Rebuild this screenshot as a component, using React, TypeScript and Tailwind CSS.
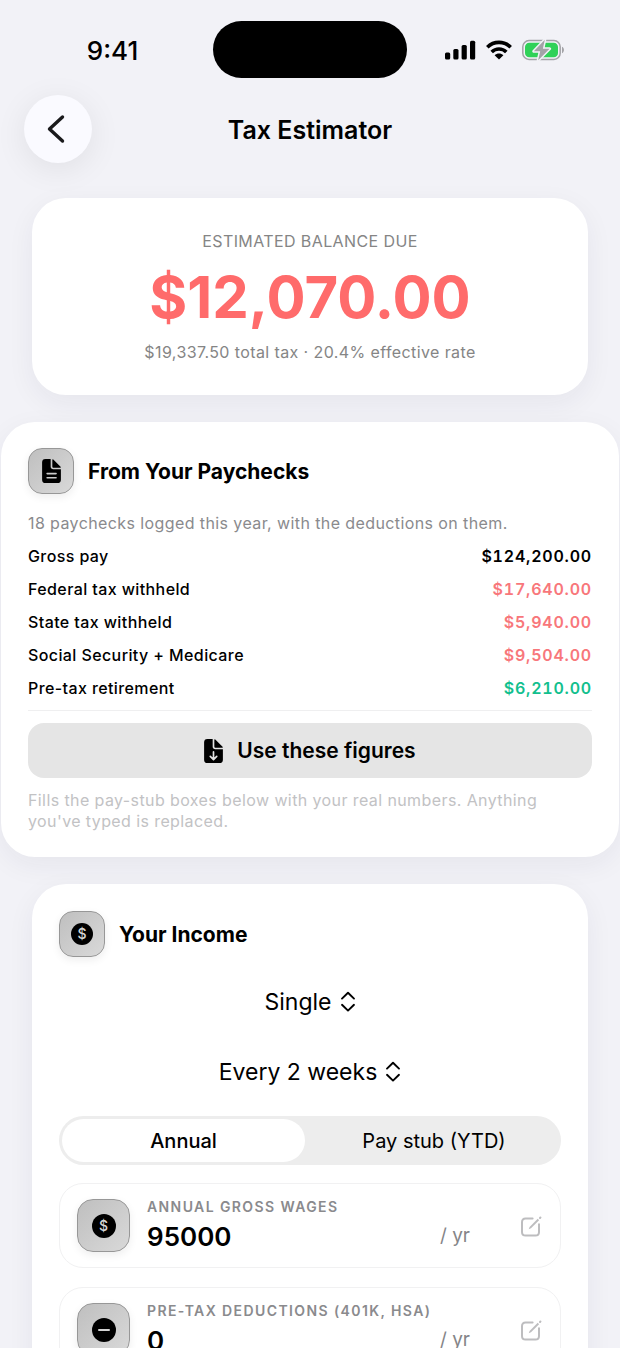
import clsx from 'clsx';
import React, { useState } from 'react';

type Tone = 'plain' | 'negative' | 'positive';

const paycheckRows: { label: string; amount: string; tone: Tone }[] = [
  { label: 'Gross pay', amount: '$124,200.00', tone: 'plain' },
  { label: 'Federal tax withheld', amount: '$17,640.00', tone: 'negative' },
  { label: 'State tax withheld', amount: '$5,940.00', tone: 'negative' },
  { label: 'Social Security + Medicare', amount: '$9,504.00', tone: 'negative' },
  { label: 'Pre-tax retirement', amount: '$6,210.00', tone: 'positive' },
];

const toneClasses: Record<Tone, string> = {
  plain: 'font-semibold text-black',
  negative: 'font-semibold text-[#f8777b]',
  positive: 'font-semibold text-[#12bf8e]',
};

const SignalIcon = () => (
  <svg width="31" height="20" viewBox="0 0 31 20" aria-hidden="true">
    <rect x="0" y="12.5" width="5.2" height="7" rx="1.5" />
    <rect x="8.3" y="9" width="5.2" height="10.5" rx="1.5" />
    <rect x="16.6" y="5" width="5.2" height="14.5" rx="1.5" />
    <rect x="25" y="0.7" width="5.2" height="18.8" rx="1.5" />
  </svg>
);

const WifiIcon = () => (
  <svg width="26" height="20" viewBox="0 0 26 20" fill="none" stroke="#000" strokeWidth="3.6" aria-hidden="true">
    <path d="M1.3 7.2 C7.8 0.8 18.2 0.8 24.7 7.2" />
    <path d="M5.7 12 C9.8 8 16.2 8 20.3 12" />
    <path d="M13 19.4 L8.6 15.2 C11.1 13 14.9 13 17.4 15.2 Z" fill="#000" stroke="none" />
  </svg>
);

const BatteryIcon = () => (
  <svg width="43" height="22" viewBox="0 0 43 22" aria-hidden="true">
    <rect x="0.8" y="1.6" width="37.4" height="18.8" rx="6.2" fill="none" stroke="#a3a3a7" strokeWidth="1.5" />
    <path d="M40 7.8 C42.6 8.8 42.6 13.2 40 14.2 Z" fill="#a3a3a7" />
    <rect x="3" y="3.7" width="33" height="14.6" rx="4.3" fill="#30d158" />
    <path
      d="M22.8 0.8 L11.8 12.3 H18.2 L16.2 21.2 L27.6 9.7 H20.9 Z"
      fill="#a3a3a7"
      stroke="#f2f2f7"
      strokeWidth="3"
      strokeLinejoin="round"
      paintOrder="stroke"
    />
  </svg>
);

const DocShape = () => (
  <>
    <path d="M3.2 0 H8.2 V7.4 C8.2 8.9 9.2 9.8 10.6 9.8 H18 V19.8 C18 21.9 16.9 23 14.8 23 H3.2 C1.1 23 0 21.9 0 19.8 V3.2 C0 1.1 1.1 0 3.2 0 Z" />
    <path d="M9.8 0.7 C9.8 0.1 10.3 0 10.7 0.4 L17.7 7.4 C18.1 7.9 17.9 8.4 17.3 8.4 H11 C10.2 8.4 9.8 8 9.8 7.2 Z" />
  </>
);

const DocTextIcon = () => (
  <svg width="19" height="24" viewBox="0 0 18 23" aria-hidden="true">
    <DocShape />
    <path d="M4.8 14 H13.4 M4.8 17.9 H13.4" stroke="#cbcbcb" strokeWidth="1.5" strokeLinecap="round" />
  </svg>
);

const DocDownloadIcon = () => (
  <svg width="19" height="24" viewBox="0 0 18 23" aria-hidden="true">
    <DocShape />
    <path
      d="M9 12.4 V19.6 M5.9 16.7 L9 19.8 L12.1 16.7"
      fill="none"
      stroke="#e5e5e5"
      strokeWidth="1.6"
      strokeLinecap="round"
      strokeLinejoin="round"
    />
  </svg>
);

const UpDownIcon = () => (
  <svg
    width="16"
    height="22"
    viewBox="0 0 16 22"
    fill="none"
    stroke="#000"
    strokeWidth="1.9"
    strokeLinecap="round"
    strokeLinejoin="round"
    aria-hidden="true"
  >
    <path d="M2 7.6 L8 1.8 L14 7.6 M2 13.8 L8 19.6 L14 13.8" />
  </svg>
);

const DollarBadge = ({ small = false }: { small?: boolean }) => (
  <span
    className={clsx(
      'flex items-center justify-center rounded-full bg-black text-sm font-medium text-[#d4d4d4]',
      small ? 'size-[22px]' : 'size-6'
    )}
  >
    $
  </span>
);

const MinusBadge = () => (
  <span className="flex size-6 items-center justify-center rounded-full bg-black">
    <span className="h-0.5 w-3 rounded-full bg-[#d4d4d4]" />
  </span>
);

const EditIcon = () => (
  <svg width="22" height="22" viewBox="0 0 22 22" fill="none" stroke="#bdbdbf" strokeWidth="2" strokeLinecap="round" aria-hidden="true">
    <path d="M12.6 3.6 H5.6 C3.2 3.6 2 4.8 2 7.2 V17 C2 19.4 3.2 20.6 5.6 20.6 H15.4 C17.8 20.6 19 19.4 19 17 V9.2" />
    <path d="M8.7 14.2 L9.6 11.9 L17.7 3.8 L19.1 5.2 L11 13.3 Z" fill="#bdbdbf" stroke="none" />
    <path d="M20 2.9 L20.4 2.5" strokeWidth="2.1" />
  </svg>
);

const IconTile = ({ large = false, children }: { large?: boolean; children: React.ReactNode }) => (
  <span
    className={clsx(
      'flex shrink-0 items-center justify-center border border-[#979797] bg-gradient-to-br from-[#bfbfbf] to-[#d9d9d9] shadow-[0_3px_8px_rgba(0,0,0,0.07)]',
      large ? 'size-[53px] rounded-2xl' : 'size-[46px] rounded-[14px]'
    )}
  >
    {children}
  </span>
);

const Card = ({ className, children }: { className?: string; children: React.ReactNode }) => (
  <section className={clsx('rounded-[34px] bg-white shadow-[0_8px_28px_rgba(30,30,60,0.06)]', className)}>
    {children}
  </section>
);

const CardHeader = ({ icon, title }: { icon: React.ReactNode; title: string }) => (
  <div className="flex items-center gap-3.5">
    <IconTile>{icon}</IconTile>
    <h2 className="pt-0.5 text-[21px] font-bold">{title}</h2>
  </div>
);

const PickerMenu = ({ label, options }: { label: string; options: string[] }) => (
  <div className="flex h-10 items-center justify-center gap-2">
    <select
      aria-label={label}
      className="h-10 appearance-none bg-transparent text-[23px] leading-10 outline-none [field-sizing:content]"
    >
      {options.map((option) => (
        <option key={option}>{option}</option>
      ))}
    </select>
    <UpDownIcon />
  </div>
);

interface MoneyFieldProps {
  id: string;
  label: string;
  initial: string;
  icon: React.ReactNode;
}

const MoneyField = ({ id, label, initial, icon }: MoneyFieldProps) => {
  const [value, setValue] = useState(initial);

  return (
    <div className="flex items-center rounded-3xl border border-[#f1f1f2] py-[15px] pr-[18px] pl-[17px]">
      <IconTile large>{icon}</IconTile>
      <div className="ml-[17px] min-w-0 flex-1">
        <label htmlFor={id} className="block text-sm leading-4 font-semibold tracking-widest text-[#8a8a8d] uppercase">
          {label}
        </label>
        <div className="mt-1.5 flex items-center">
          <input
            id={id}
            inputMode="decimal"
            value={value}
            onChange={(e) => setValue(e.target.value)}
            className="h-[31px] min-w-0 flex-1 bg-transparent text-[26px] font-semibold outline-none"
          />
          <span className="mr-[50px] text-[19px] text-[#858588]">/ yr</span>
        </div>
      </div>
      <button type="button" aria-label={`Edit ${label}`}>
        <EditIcon />
      </button>
    </div>
  );
};

const periods = ['Annual', 'Pay stub (YTD)'];

const TaxEstimatorPage = () => {
  const [period, setPeriod] = useState('Annual');

  return (
    <div className="h-screen w-full overflow-x-hidden overflow-y-auto bg-[#f2f2f7] font-['Inter',sans-serif] text-black [scrollbar-width:none]">
      {/* Status bar */}
      <div className="grid grid-cols-[1fr_194px_1fr] items-center pt-[21px]">
        <span className="pt-0.5 pl-3 text-center text-[26px] font-medium">9:41</span>
        <span className="h-[57px] rounded-full bg-black" />
        <div className="flex items-center justify-center gap-2.5 pr-[18px]">
          <SignalIcon />
          <WifiIcon />
          <BatteryIcon />
        </div>
      </div>

      {/* Navigation */}
      <header className="mt-[17px] grid grid-cols-[68px_1fr_68px] items-center px-6">
        <button
          type="button"
          aria-label="Back"
          className="flex size-[68px] items-center justify-center rounded-full bg-[#fafaff] shadow-[0_6px_32px_rgba(0,0,0,0.08)]"
        >
          <svg width="18" height="30" viewBox="0 0 18 30" fill="none" className="mr-1" aria-hidden="true">
            <path d="M15.5 3 L2.5 15 L15.5 27" stroke="#1a1a1c" strokeWidth="3.4" strokeLinecap="round" strokeLinejoin="round" />
          </svg>
        </button>
        <h1 className="pt-1 text-center text-[25px] font-semibold">Tax Estimator</h1>
      </header>

      <main className="mt-[35px] flex flex-col gap-[27px] pb-8">
        <Card className="mx-8 px-7 py-[33px] text-center">
          <p className="text-base leading-5 tracking-wide text-[#858585]">ESTIMATED BALANCE DUE</p>
          <p className="mt-3.5 text-[58px] leading-[64px] font-bold text-[#ff6b6b]">$12,070.00</p>
          <p className="mt-[13px] text-base leading-5 tracking-wide text-[#858585]">
            $19,337.50 total tax · 20.4% effective rate
          </p>
        </Card>

        {/* Paycheck totals */}
        <Card className="mx-px px-[27px] pt-[26px] pb-[25px]">
          <CardHeader icon={<DocTextIcon />} title="From Your Paychecks" />
          <p className="mt-[19px] text-base leading-[21px] tracking-wide text-[#8a8a8d]">
            18 paychecks logged this year, with the deductions on them.
          </p>
          <table className="mt-[5px] w-full text-base">
            <tbody>
              {paycheckRows.map((row) => (
                <tr key={row.label} className="h-[33px]">
                  <th scope="row" className="p-0 text-left font-medium tracking-wide">
                    {row.label}
                  </th>
                  <td className={clsx('p-0 text-right tracking-wider tabular-nums', toneClasses[row.tone])}>
                    {row.amount}
                  </td>
                </tr>
              ))}
            </tbody>
          </table>
          <hr className="mt-1.5 border-[#efeff0]" />
          <button
            type="button"
            className="mt-3 flex h-[55px] w-full items-center justify-center gap-3.5 rounded-2xl bg-[#e5e5e5] text-[21px] font-semibold"
          >
            <DocDownloadIcon />
            Use these figures
          </button>
          <p className="mt-3 pr-6 text-base leading-[21px] tracking-wide text-[#c2c2c4]">
            Fills the pay-stub boxes below with your real numbers. Anything you've typed is replaced.
          </p>
        </Card>

        {/* Income inputs */}
        <Card className="mx-8 p-[27px]">
          <CardHeader icon={<DollarBadge small />} title="Your Income" />
          <div className="mt-[25px] flex flex-col gap-[30px]">
            <PickerMenu label="Filing status" options={['Single', 'Married filing jointly', 'Head of household']} />
            <PickerMenu label="Pay frequency" options={['Every 2 weeks', 'Weekly', 'Twice a month', 'Monthly']} />
          </div>
          <div className="mt-6 grid h-[49px] grid-cols-[49%_50%] justify-between rounded-full bg-[#ededed] p-[3px]">
            {periods.map((item) => (
              <button
                key={item}
                type="button"
                aria-pressed={period === item}
                onClick={() => setPeriod(item)}
                className={clsx('rounded-full text-xl', period === item ? 'bg-white font-medium' : 'font-normal')}
              >
                {item}
              </button>
            ))}
          </div>
          <div className="mt-[18px] flex flex-col gap-[19px]">
            <MoneyField id="gross-wages" label="Annual gross wages" initial="95000" icon={<DollarBadge />} />
            <MoneyField id="pretax" label="Pre-tax deductions (401k, HSA)" initial="0" icon={<MinusBadge />} />
          </div>
        </Card>
      </main>
    </div>
  );
};

export default TaxEstimatorPage;
